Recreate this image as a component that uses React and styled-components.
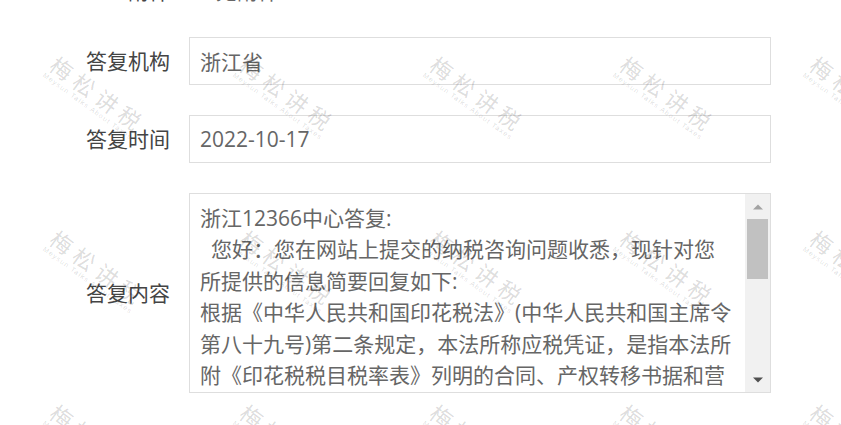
import React from 'react';
import styled, { createGlobalStyle } from 'styled-components';

const GlobalStyle = createGlobalStyle`
  html, body { margin: 0; padding: 0; background: #fff; }
  body {
    font-family: "Open Sans", "Noto Sans CJK SC", sans-serif;
    overflow: hidden;
  }
`;

const Page = styled.div`
  position: relative;
  width: 841px;
  height: 425px;
  overflow: hidden;
  background: #fff;
`;

const Form = styled.div`
  display: flex;
  flex-direction: column;
  gap: 30px;
  margin-top: -24px;
`;

const Row = styled.div`
  display: grid;
  grid-template-columns: 170px 582px;
  column-gap: 19px;
  align-items: center;
`;

const Label = styled.div`
  text-align: right;
  font-size: 21px;
  line-height: 31px;
  color: #444;
  white-space: nowrap;
`;

const PlainValue = styled.div`
  font-size: 21px;
  line-height: 31px;
  color: #666;
  padding-left: 27px;
`;

const Field = styled.div`
  box-sizing: border-box;
  height: 48px;
  border: 1px solid #dedede;
  background: #fff;
  padding: 0 10px;
  display: flex;
  align-items: center;
  font-size: 21px;
  color: #666;
`;

const TextBox = styled.div`
  box-sizing: border-box;
  height: 200px;
  border: 1px solid #dedede;
  background: #fff;
  display: flex;
`;

const TextContent = styled.div`
  flex: 1;
  min-width: 0;
  overflow: hidden;
  padding: 9px 8px 0 10px;
  font-size: 21px;
  line-height: 31.4px;
  color: #666;
  white-space: pre-wrap;
`;

const Scrollbar = styled.div`
  width: 25px;
  flex: none;
  background: #f1f1f1;
  display: flex;
  flex-direction: column;
`;

const ArrowButton = styled.div`
  height: 25px;
  flex: none;
  display: flex;
  align-items: center;
  justify-content: center;
  color: ${(p) => (p.$disabled ? '#a3a3a3' : '#505050')};
`;

const Track = styled.div`
  flex: 1;
  padding: 0 2px;
`;

const Thumb = styled.div`
  height: 60px;
  background: #c1c1c1;
`;

const Watermarks = styled.div`
  position: absolute;
  inset: 0;
  pointer-events: none;
  z-index: 5;
  display: grid;
  grid-template-columns: repeat(5, 190px);
  grid-auto-rows: 174px;
`;

const Mark = styled.div`
  padding: 52px 0 0 60px;
`;

const MarkInner = styled.div`
  display: inline-block;
  transform: rotate(36deg);
  transform-origin: 0 0;
  white-space: nowrap;
`;

const MarkTitle = styled.div`
  font-family: "Noto Sans CJK SC", sans-serif;
  font-size: 22px;
  line-height: 23px;
  letter-spacing: 6px;
  color: rgba(0, 0, 0, 0.15);
`;

const MarkSub = styled.div`
  font-family: "Liberation Sans", sans-serif;
  font-size: 7px;
  line-height: 9px;
  letter-spacing: 1.1px;
  color: rgba(0, 0, 0, 0.15);
`;

const Triangle = ({ up }) => (
  <svg width="10" height="6" viewBox="0 0 10 6">
    <path d={up ? 'M0 5.5 L5 0.5 L10 5.5 Z' : 'M0 0.5 L10 0.5 L5 5.5 Z'} fill="currentColor" />
  </svg>
);

const content =
  '浙江12366中心答复:\n' +
  '  您好：您在网站上提交的纳税咨询问题收悉，现针对您\n' +
  '所提供的信息简要回复如下:\n' +
  '根据《中华人民共和国印花税法》(中华人民共和国主席令\n' +
  '第八十九号)第二条规定，本法所称应税凭证，是指本法所\n' +
  '附《印花税税目税率表》列明的合同、产权转移书据和营\n' +
  '业账簿。\n' +
  '上述回复仅供参考，具体请以相关政策规定为准。';

export default function App() {
  const marks = Array.from({ length: 15 });
  return (
    <>
      <GlobalStyle />
      <Page>
        <Form>
          <Row>
            <Label>附件</Label>
            <PlainValue>无附件</PlainValue>
          </Row>
          <Row>
            <Label>答复机构</Label>
            <Field>浙江省</Field>
          </Row>
          <Row>
            <Label>答复时间</Label>
            <Field>2022-10-17</Field>
          </Row>
          <Row>
            <Label>答复内容</Label>
            <TextBox>
              <TextContent>{content}</TextContent>
              <Scrollbar>
                <ArrowButton $disabled>
                  <Triangle up />
                </ArrowButton>
                <Track>
                  <Thumb />
                </Track>
                <ArrowButton>
                  <Triangle />
                </ArrowButton>
              </Scrollbar>
            </TextBox>
          </Row>
        </Form>
        <Watermarks>
          {marks.map((_, i) => (
            <Mark key={i}>
              <MarkInner>
                <MarkTitle>梅松讲税</MarkTitle>
                <MarkSub>Meysun Talks About Taxes</MarkSub>
              </MarkInner>
            </Mark>
          ))}
        </Watermarks>
      </Page>
    </>
  );
}
